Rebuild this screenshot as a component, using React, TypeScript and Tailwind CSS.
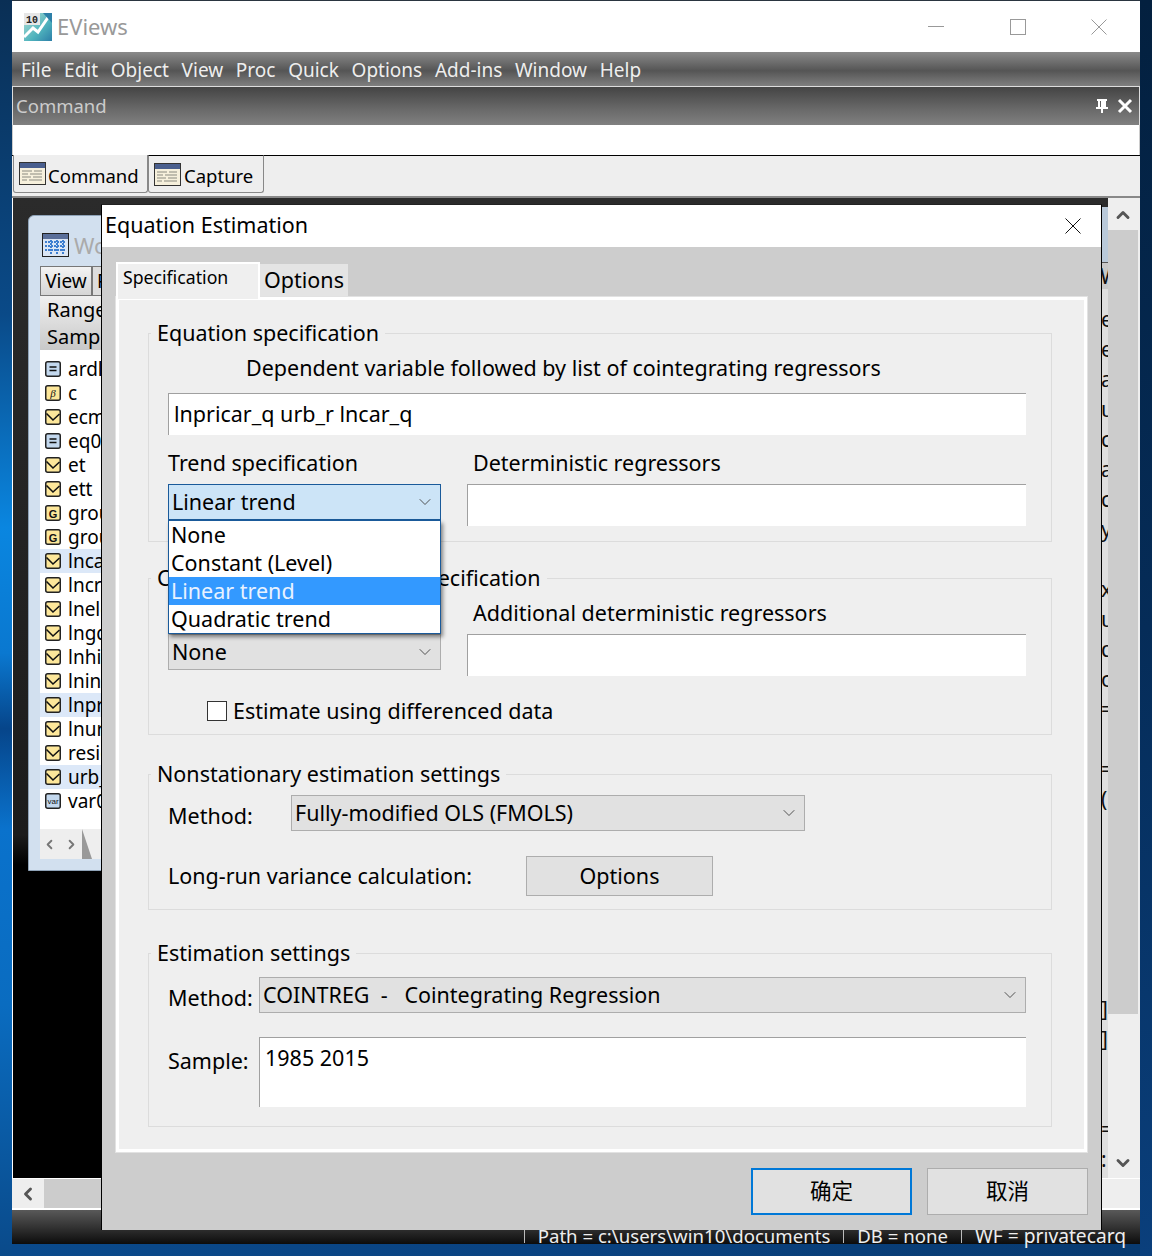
import { ChevronDown, ChevronLeft, ChevronRight, ChevronUp } from "lucide-react";
import { ReactNode } from "react";

const menus = ["File", "Edit", "Object", "View", "Proc", "Quick", "Options", "Add-ins", "Window", "Help"];

const objects = [
  { name: "ardl01", kind: "eq" },
  { name: "c", kind: "coef" },
  { name: "ecm", kind: "series" },
  { name: "eq01", kind: "eq" },
  { name: "et", kind: "series" },
  { name: "ett", kind: "series" },
  { name: "group01", kind: "group" },
  { name: "group02", kind: "group" },
  { name: "lncar_q", kind: "series", selected: true },
  { name: "lncrude", kind: "series" },
  { name: "lnelec", kind: "series" },
  { name: "lngdp", kind: "series" },
  { name: "lnhigh", kind: "series" },
  { name: "lnincome", kind: "series" },
  { name: "lnpricar_q", kind: "series", selected: true },
  { name: "lnurb", kind: "series" },
  { name: "resid", kind: "series" },
  { name: "urb_r", kind: "series", selected: true },
  { name: "var01", kind: "var" },
];

const peekLines = ["e", "e", "a", "u", "c", "a", "c", "y", "", "x", "u", "d", "o", "=", "", "=", "(", "", "", "", "", "", "", "]", "]", "", "", "=", ":"];

function ObjectIcon({ kind }: { kind: string }) {
  const blue = kind === "eq" || kind === "var";
  return (
    <svg width="16" height="16" viewBox="0 0 16 16" className="shrink-0">
      <rect x="0.75" y="0.75" width="14.5" height="14.5" rx="2" fill={blue ? "#c3d8ee" : "#fde79a"} stroke="#222" strokeWidth="1.5" />
      {kind === "eq" && <path d="M4.5 6h7M4.5 9.5h7" stroke="#111" strokeWidth="1.6" />}
      {kind === "series" && <path d="M1.5 4.5l6.5 6.5 6.5-6" fill="none" stroke="#111" strokeWidth="1.5" />}
      {kind === "group" && (
        <text x="8" y="12.5" textAnchor="middle" fontSize="11" fontWeight="700" fontFamily="Liberation Sans" fill="#111">
          G
        </text>
      )}
      {kind === "coef" && (
        <text x="8" y="12" textAnchor="middle" fontSize="11" fontStyle="italic" fontFamily="Liberation Serif" fill="#111">
          β
        </text>
      )}
      {kind === "var" && (
        <text x="8" y="11" textAnchor="middle" fontSize="8" fontFamily="Liberation Sans" fill="#111">
          var
        </text>
      )}
    </svg>
  );
}

function TabIcon() {
  return (
    <svg width="27" height="23" viewBox="0 0 27 23" className="shrink-0">
      <rect x="0.5" y="0.5" width="26" height="22" fill="#f6f0dc" stroke="#333" />
      <rect x="1" y="1" width="25" height="5" fill="#4a5f8e" />
      <path d="M3 9h10M15 9h8M3 12h6M11 12h12M3 15h9M3 18h5M14 15h9M10 18h13" stroke="#8a8a80" strokeWidth="1" />
    </svg>
  );
}

function Logo() {
  return (
    <svg width="28" height="28" viewBox="0 0 28 28" className="shrink-0">
      <defs>
        <linearGradient id="logoBg" x1="0" y1="0" x2="1" y2="1">
          <stop offset="0" stopColor="#b5e0d6" />
          <stop offset="0.6" stopColor="#4fb3bd" />
          <stop offset="1" stopColor="#2d7fa8" />
        </linearGradient>
      </defs>
      <rect width="28" height="28" fill="url(#logoBg)" />
      <rect width="16" height="12" fill="#e6e6e6" />
      <path d="M0 24l9-9 5 4L25 3" fill="none" stroke="#fff" strokeWidth="3" />
      <path d="M19 0h9v10z" fill="#2d7fa8" />
      <text x="2" y="10" fontSize="10" fontWeight="700" fontFamily="Liberation Mono" fill="#222">
        10
      </text>
    </svg>
  );
}

function GroupBox({ title, className, children }: { title: string; className: string; children: ReactNode }) {
  return (
    <div className={`relative border border-[#dcdcdc] pl-[19px] pr-[25px] ${className}`}>
      <span className="absolute left-[2px] top-[-15px] bg-[#efefef] px-[6px] leading-[28px]">{title}</span>
      {children}
    </div>
  );
}

function Combo({ value, active, className }: { value: string; active?: boolean; className: string }) {
  return (
    <div
      className={`flex h-[36px] shrink-0 items-center justify-between border pl-[3px] pr-[5px] ${
        active ? "border-[#1a5a9a] bg-[#cce4f7]" : "border-[#adadad] bg-[#e1e1e1]"
      } ${className}`}
    >
      <span>{value}</span>
      <ChevronDown size={20} strokeWidth={1.1} color="#444" />
    </div>
  );
}

function TextBox({ className, children }: { className: string; children?: ReactNode }) {
  return <div className={`border-l border-t border-[#a0a0a0] bg-white ${className}`}>{children}</div>;
}

export default function App() {
  return (
    <div className="flex h-[1256px] w-[1152px] overflow-hidden font-['Noto_Sans','Noto_Sans_CJK_SC',sans-serif] text-[21.5px] leading-[30px] text-black">
      <div className="w-[12px] shrink-0 bg-[linear-gradient(180deg,#0a2f55_0%,#0a4a88_25%,#0a86e0_42%,#0a78d0_52%,#06458a_58%,#0a72cc_66%,#0a6cc0_80%,#0a4a8a_100%)]" />
      <div className="flex min-w-0 flex-1 flex-col">
        <div className="h-px shrink-0 bg-[#2a3540]" />
        <div className="relative flex min-h-0 flex-1 flex-col">
          {/* title */}
          <div className="flex h-[51px] shrink-0 items-center bg-white pl-[12px] pr-[33px]">
            <Logo />
            <span className="ml-[5px] pb-[2px] text-[22px] text-[#999]">EViews</span>
            <div className="ml-auto flex items-center">
              <div className="h-px w-[16px] bg-[#999]" />
              <div className="ml-[66px] h-[16px] w-[16px] border border-[#999]" />
              <svg width="16" height="16" viewBox="0 0 16 16" className="ml-[65px]">
                <path d="M0.5 0.5l15 15M15.5 0.5l-15 15" stroke="#999" strokeWidth="1" />
              </svg>
            </div>
          </div>
          {/* menu */}
          <div className="flex h-[34px] shrink-0 items-center gap-[12.7px] bg-[linear-gradient(180deg,#8a8a8a_0%,#555_55%,#7f7f7f_100%)] pl-[9px] pt-[2px] text-[19px] text-[#eee]">
            {menus.map((m) => (
              <span key={m}>{m}</span>
            ))}
          </div>
          {/* command bar */}
          <div className="flex h-[39px] shrink-0 items-center border-x border-t border-[#ddd] bg-[linear-gradient(180deg,#444_0%,#6a6a6a_60%,#808080_100%)] pl-[3px] pr-[6px] text-[18.5px] text-[#ccc]">
            <span>Command</span>
            <svg width="14" height="16" viewBox="0 0 14 16" className="ml-auto" fill="#fff">
              <path d="M2 1h10v2h-1v6h2v2H8v4H6v-4H1V9h2V3H2zM5 3v6h1V3z" fillRule="evenodd" />
            </svg>
            <svg width="16" height="16" viewBox="0 0 16 16" className="ml-[8px]">
              <path d="M2 2l12 12M14 2L2 14" stroke="#fff" strokeWidth="3" />
            </svg>
          </div>
          <div className="h-[30px] shrink-0 border-x border-[#ccc] border-t-[#bbb] bg-white" />
          {/* output tabs */}
          <div className="relative h-[43px] shrink-0 border-b-2 border-t border-b-[#888] border-t-black bg-[#eee] text-[18.5px]">
            <div className="flex items-start pl-[1px]">
              <div className="mt-[-1px] flex h-[38px] w-[135px] items-center gap-[2px] rounded-b-[3px] border-x border-b border-[#888] bg-[#eee] pl-[5px]">
                <TabIcon />
                <span className="pt-[4px]">Command</span>
              </div>
              <div className="mt-[-1px] flex h-[38px] w-[116px] items-center gap-[3px] rounded-b-[3px] border-x border-b border-[#888] border-t border-t-black bg-[#eee] pl-[5px]">
                <TabIcon />
                <span className="pt-[4px]">Capture</span>
              </div>
            </div>
          </div>
          {/* client */}
          <div className="flex min-h-0 flex-1 flex-col">
            <div className="flex min-h-0 flex-1">
              <div className="relative ml-px min-w-0 flex-1 overflow-hidden bg-[linear-gradient(180deg,#2b2b2b_0%,#1c1c1c_65%,#000_68%)]">
                {/* workfile window */}
                <div className="absolute left-[15px] top-[17px] flex h-[656px] w-[420px] flex-col rounded-tl-[6px] border border-[#8fa3b8] bg-[#d2e0ef] px-[11px] pb-[11px] pt-[50px]">
                  <div className="absolute left-[13px] top-[14px] flex items-center gap-[5px] text-[#aaa]">
                    <svg width="27" height="24" viewBox="0 0 27 24">
                      <rect x="0.5" y="0.5" width="26" height="23" fill="#dbe6f5" stroke="#222" />
                      <rect x="1" y="1" width="25" height="5" fill="#5a6f9a" />
                      <path d="M3 9h21M3 13h21M3 17h21M9 7v15M15 7v15M21 7v15" stroke="#3f7fd0" strokeWidth="2" strokeDasharray="2 1" />
                    </svg>
                    <span className="text-[22px]">Workfile</span>
                  </div>
                  <div className="flex h-[30px] shrink-0 text-[19px] leading-[28px]">
                    <div className="flex w-[52px] items-center justify-center border border-[#777] bg-[linear-gradient(180deg,#f3f3f3,#d5d5d5)]">View</div>
                    <div className="w-[60px] border border-[#777] bg-[#ddd] pl-[4px]">Proc</div>
                  </div>
                  <div className="h-[54px] shrink-0 bg-[linear-gradient(180deg,#f0f0f0,#c8c8c8)] pl-[7px] text-[20px] leading-[27px]">
                    <div>Range</div>
                    <div>Sample</div>
                  </div>
                  <div className="flex min-h-0 flex-1 flex-col bg-white pt-[7px] text-[19px]">
                    {objects.map((o) => (
                      <div
                        key={o.name}
                        className={`flex h-[24px] shrink-0 items-center gap-[7px] pl-[5px] leading-[24px] ${o.selected ? "bg-[#dce8f8]" : ""}`}
                      >
                        <ObjectIcon kind={o.kind} />
                        <span>{o.name}</span>
                      </div>
                    ))}
                    <div className="mt-auto flex h-[30px] shrink-0 items-center bg-[#eee] pl-[2px] text-[#777]">
                      <ChevronLeft size={15} strokeWidth={3} />
                      <ChevronRight size={15} strokeWidth={3} className="ml-[7px]" />
                      <svg width="10" height="30" viewBox="0 0 10 30" className="ml-[3px]">
                        <path d="M0 0l10 30H0z" fill="#999" />
                      </svg>
                    </div>
                  </div>
                </div>
                {/* window behind the dialog, only its edge shows */}
                <div className="absolute right-0 top-[9px] flex h-[971px] w-[60px] flex-col overflow-hidden bg-[#dedede] text-[21px] leading-[30px] text-[#111]">
                  <div className="h-[56px] shrink-0 border-b border-[#555] bg-[#b9c9d9]" />
                  <div className="h-[26px] shrink-0 bg-[#c8c8c8] pl-[52px] leading-[26px]">W</div>
                  <div className="mt-[15px] pl-[53px]">
                    {peekLines.map((t, i) => (
                      <div key={i} className="h-[30px]">
                        {t}
                      </div>
                    ))}
                  </div>
                </div>
              </div>
              {/* vertical scroll bar */}
              <div className="flex w-[32px] shrink-0 flex-col bg-[#eee] pr-[2px] pt-[2px]">
                <div className="flex h-[30px] shrink-0 items-center justify-center bg-[#eee] text-[#555]">
                  <ChevronUp size={20} strokeWidth={3.5} />
                </div>
                <div className="h-[784px] shrink-0 bg-[#ccc]" />
                <div className="flex h-[164px] shrink-0 items-end justify-center bg-[#eee] pb-[5px] text-[#555]">
                  <ChevronDown size={20} strokeWidth={3.5} />
                </div>
              </div>
            </div>
            {/* horizontal scroll bar */}
            <div className="flex h-[32px] shrink-0 border-b-2 border-t border-b-white border-t-white bg-[#eee]">
              <div className="flex w-[32px] items-center justify-center text-[#555]">
                <ChevronLeft size={20} strokeWidth={3.5} />
              </div>
              <div className="w-[60px] bg-[#ccc]" />
            </div>
          </div>
          {/* status */}
          <div className="flex h-[34px] shrink-0 items-end justify-end bg-[linear-gradient(180deg,#595959_0%,#333_50%,#0c0c0c_100%)] pb-px pr-[14px] text-[18.6px] leading-[14px] text-[#eee]">
            <span className="border-l border-[#bbb] pl-[13px]">Path = c:\users\win10\documents</span>
            <span className="ml-[13px] border-l border-[#bbb] pl-[13px]">DB = none</span>
            <span className="ml-[13px] border-l border-[#bbb] pl-[13px] text-[19.2px]">WF = privatecarq</span>
          </div>

          {/* dialog */}
          <div className="absolute left-[89px] top-[203px] flex h-[1026px] w-[1001px] flex-col border-x border-t border-x-black border-t-[#222] bg-[#cdcdcd]">
            <div className="flex h-[42px] shrink-0 items-center justify-between bg-white pl-[3px] pr-[20px]">
              <span className="pb-[2px]">Equation Estimation</span>
              <svg width="16" height="16" viewBox="0 0 16 16">
                <path d="M0.5 0.5l15 15M15.5 0.5l-15 15" stroke="#111" strokeWidth="1" />
              </svg>
            </div>
            <div className="flex h-[50px] shrink-0 items-end pl-[14px]">
              <div className="relative z-10 mb-[-2px] flex h-[37px] w-[144px] items-start border-x-2 border-t-2 border-white bg-[#efefef] pl-[5px] text-[17.7px] leading-[27px]">
                Specification
              </div>
              <div className="flex h-[33px] w-[88px] items-center justify-center bg-[#e4e4e4] pb-[2px]">Options</div>
            </div>
            <div className="mx-[14px] flex h-[855px] shrink-0 flex-col border-[3px] border-white bg-[#efefef] pl-[29px] pr-[32px] pt-[33px] shadow-[0_0_0_1px_#e2e2e2]">
              <GroupBox title="Equation specification" className="h-[209px] shrink-0 pt-[19px]">
                <div className="h-[30px] pl-[78px] leading-[29px]">Dependent variable followed by list of cointegrating regressors</div>
                <TextBox className="mt-[10px] flex h-[42px] items-center pb-[2px] pl-[5px]">lnpricar_q urb_r lncar_q</TextBox>
                <div className="mt-[13px] flex">
                  <div className="w-[273px] shrink-0">
                    <div className="h-[30px] leading-[29px]">Trend specification</div>
                    <Combo value="Linear trend" active className="mt-[6px]" />
                  </div>
                  <div className="ml-[26px] flex-1">
                    <div className="h-[30px] pl-[6px] leading-[29px]">Deterministic regressors</div>
                    <TextBox className="mt-[6px] h-[42px]" />
                  </div>
                </div>
              </GroupBox>
              <GroupBox title="Cointegrating regressors specification" className="mt-[36px] h-[157px] shrink-0 pt-[19px]">
                <div className="flex">
                  <div className="w-[273px] shrink-0 pt-[36px]">
                    <Combo value="None" className="" />
                  </div>
                  <div className="ml-[26px] flex-1">
                    <div className="h-[30px] pl-[6px] leading-[29px]">Additional deterministic regressors</div>
                    <TextBox className="mt-[6px] h-[42px]" />
                  </div>
                </div>
                <div className="mt-[20px] flex h-[30px] items-center gap-[6px] pl-[39px]">
                  <div className="h-[20px] w-[20px] border border-[#333] bg-white" />
                  <span className="pb-[1px]">Estimate using differenced data</span>
                </div>
              </GroupBox>
              <GroupBox title="Nonstationary estimation settings" className="mt-[39px] h-[136px] shrink-0 pt-[20px]">
                <div className="flex items-start">
                  <span className="mt-[6px] w-[123px] shrink-0">Method:</span>
                  <Combo value="Fully-modified OLS (FMOLS)" className="w-[514px]" />
                </div>
                <div className="mt-[25px] flex items-center">
                  <span className="w-[358px] shrink-0 pb-[1px]">Long-run variance calculation:</span>
                  <div className="flex h-[40px] w-[187px] items-center justify-center border border-[#adadad] bg-[#e1e1e1] pb-[1px]">Options</div>
                </div>
              </GroupBox>
              <GroupBox title="Estimation settings" className="mt-[43px] h-[174px] shrink-0 pt-[23px]">
                <div className="flex items-start">
                  <span className="mt-[6px] w-[91px] shrink-0">Method:</span>
                  <Combo value="COINTREG  -   Cointegrating Regression" className="flex-1 whitespace-pre" />
                </div>
                <div className="mt-[24px] flex items-start">
                  <span className="mt-[9px] w-[91px] shrink-0">Sample:</span>
                  <TextBox className="h-[70px] flex-1 pl-[5px] pt-[5px] leading-[29px]">1985 2015</TextBox>
                </div>
              </GroupBox>
            </div>
            <div className="flex flex-1 items-start justify-end gap-[15px] pr-[13px] pt-[16px]">
              <div className="flex h-[47px] w-[161px] items-center justify-center border-2 border-[#0078d7] bg-[#e1e1e1] pb-[2px]">确定</div>
              <div className="flex h-[47px] w-[161px] items-center justify-center border border-[#adadad] bg-[#e1e1e1] pb-[2px]">取消</div>
            </div>

            {/* open dropdown */}
            <div className="absolute left-[66px] top-[315px] z-20 w-[273px] border border-[#1a5a9a] bg-white pl-[2px] leading-[28px] shadow-[2px_3px_4px_rgba(0,0,0,0.45)]">
              <div className="h-[28px]">None</div>
              <div className="h-[28px]">Constant (Level)</div>
              <div className="ml-[-2px] h-[28px] bg-[#3399ff] pl-[2px] text-[#e8f2ff]">Linear trend</div>
              <div className="h-[28px]">Quadratic trend</div>
            </div>
          </div>
        </div>
        <div className="h-[12px] shrink-0 bg-[linear-gradient(90deg,#0a4a8c,#0a4280_50%,#083a70)]" />
      </div>
      <div className="w-[12px] shrink-0 bg-[linear-gradient(180deg,#03203f_0%,#052c58_50%,#0a3f7c_100%)]" />
    </div>
  );
}
